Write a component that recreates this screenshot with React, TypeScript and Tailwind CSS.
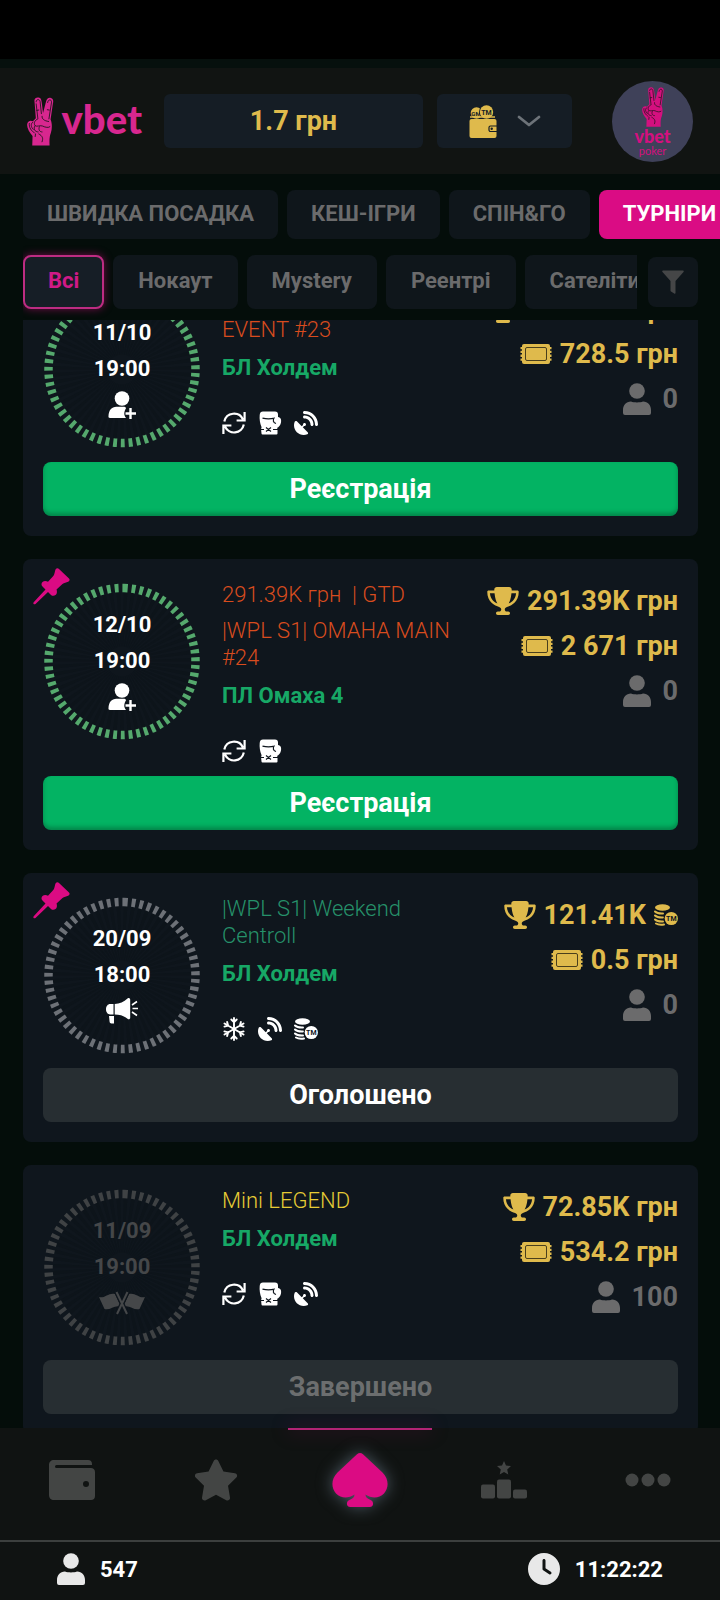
import React, { useLayoutEffect, useRef } from "react";
import { FaClock, FaSatelliteDish, FaStar, FaTrophy } from "react-icons/fa6";

type IconProps = { className?: string };

const Hand = ({ className }: IconProps) => (
  <svg viewBox="0 0 81 148" className={className} aria-hidden="true">
    <path
      fill="currentColor"
      d="M23 14C21 4 28 0 35 1C43 2 44 9 45 16L49 48L58 14C60 4 66 0 73 2C81 4 81 12 79 20L72 68C77 80 77 96 73 108C69 118 68 128 69 147H16L17 118C6 106-2 90 1 80C4 71 11 70 18 73L27 64Z"
    />
    <g fill="none" stroke="#111412" strokeWidth="2.5" strokeLinecap="round">
      <path d="M28 14C27 6 38 4 40 13L44 50M28 20L33 64M63 16C64 6 75 5 75 15L67 66M30 40l6-1M62 38l6 1" />
      <path d="M33 66C24 70 20 78 24 86C30 92 40 84 48 88C56 92 66 94 70 90M18 76C10 80 12 92 19 98M7 80C5 92 14 104 22 108M24 88C18 96 24 106 34 106M38 90C34 98 38 106 46 106M36 112C48 118 50 126 46 136M46 58C45 66 52 72 66 74M26 112L25 120" />
    </g>
  </svg>
);

const Person = ({ className }: IconProps) => (
  <svg viewBox="0 0 28 32" fill="currentColor" className={className} aria-hidden="true">
    <circle cx="14" cy="8" r="7.8" />
    <path d="M8 18.500c3 1.200 9 1.200 12 0 5 0 8 4 8 8.500V30a2 2 0 0 1-2 2H2a2 2 0 0 1-2-2v-3c0-4.500 3-8.500 8-8.500Z" />
  </svg>
);

const Ticket = ({ className }: IconProps) => (
  <svg viewBox="0 0 32 20" className={className} aria-hidden="true">
    <rect x="2" y="0" width="28" height="20" rx="2" fill="currentColor" />
    <path d="M1.500 3v14M30.500 3v14" stroke="currentColor" strokeWidth="2" strokeDasharray="2.300 1.500" />
    <rect x="5.500" y="3.500" width="21" height="13" rx="1.500" fill="none" stroke="#4a3f1c" strokeWidth="1" />
  </svg>
);

const Coins = ({ className }: IconProps) => (
  <svg viewBox="0 0 24 24" className={className} aria-hidden="true">
    <ellipse cx="8.500" cy="4.500" rx="7.500" ry="3.200" fill="currentColor" />
    <path
      d="M1 8.500c1.500 1.500 4 2.200 8 2M1 12.500c1.500 1.500 4 2.200 8 2M1 16.500c1.500 1.500 4 2.200 8 2M2 20.500c1.500 1 4 1.500 8 1"
      fill="none"
      stroke="currentColor"
      strokeWidth="2"
      strokeLinecap="round"
    />
    <circle cx="17.300" cy="15.500" r="7.600" fill="#0f161d" />
    <circle cx="17.300" cy="15.500" r="6.600" fill="currentColor" />
    <text x="17.300" y="18" textAnchor="middle" fontSize="7" fontWeight="700" fill="#0f161d">
      TM
    </text>
  </svg>
);

const Refresh = ({ className }: IconProps) => (
  <svg viewBox="0 0 24 24" fill="none" stroke="currentColor" strokeWidth="2.200" className={className} aria-hidden="true">
    <path d="M2.300 10.500A9.900 9.900 0 0 1 21 8.500M22.600 1v8.500h-8M21.800 13.500A9.900 9.900 0 0 1 3 15.500M1.400 23v-8.500h8" />
  </svg>
);

const Glove = ({ className }: IconProps) => (
  <svg viewBox="0 0 24 24" className={className} aria-hidden="true">
    <path
      fill="currentColor"
      d="M5 .5h12c2 0 3 1 3 3V6c3 .5 3.500 3 3 5.500-.5 3-2.500 4.500-4 5.500v1.500H3.500V16C2 12.500 1.300 8 1.700 4 1.900 1.500 3 .5 5 .5Z"
    />
    <path fill="currentColor" d="M3 17.500h16.500v5a1 1 0 0 1-1 1H4.500a1 1 0 0 1-1-1Z" />
    <path
      fill="none"
      stroke="#0f161d"
      strokeWidth="1.200"
      d="M4.500 7.200c4 1 8 1 12 0M16.500 6.500c-2 2.500-1.500 5 1.500 6M8 16.500l5 4M13 16.500l-5 4M2 18.500h4M15 18.500h5"
    />
  </svg>
);

const Snowflake = ({ className }: IconProps) => (
  <svg viewBox="0 0 24 24" fill="none" stroke="currentColor" strokeWidth="1.900" strokeLinecap="round" className={className} aria-hidden="true">
    {[0, 60, 120, 180, 240, 300].map((a) => (
      <path key={a} transform={`rotate(${a} 12 12)`} d="M12 12V1M9.300 2.500L12 5.200 14.700 2.500" />
    ))}
  </svg>
);

const Pin = ({ className }: IconProps) => (
  <svg viewBox="0 0 37 37" fill="currentColor" className={className} aria-hidden="true">
    <path d="M22.500 1.500c1-1.500 2.500-1.500 3.500-.5l10 9.500c1 1 .8 2.500-.8 3.300-2 .8-4 1-5.700 2.300l-6 5.500c.8 2 .5 4.500-1 5.500-1.500 1.200-3.500.8-4.500-.2l-3-3L2.500 36C1 37-.3 35.700.7 34.300L12.500 21.500l-3-3c-1.500-1.500-1.200-3.500 0-4.500 1.500-1.200 3.500-1.200 5.500-.3l5.500-6c1.200-1.700 1.200-4.200 2-6.200Z" />
  </svg>
);

const PersonPlus = () => (
  <svg viewBox="0 0 28 28" fill="currentColor" className="h-7 w-7" aria-hidden="true">
    <circle cx="14" cy="7.500" r="7.300" />
    <path d="M8.500 15.800h7c1.500 0 2.500.5 2.500 1.500-2 3.500-2.500 6.500 0 9.700H2c-1.200 0-1.700-.8-1.500-2 .3-5.500 3-9.200 8-9.200Z" />
    <path d="M22.500 17v11M17.500 22.500h10.500" stroke="currentColor" strokeWidth="2.400" />
  </svg>
);

const Megaphone = () => (
  <svg viewBox="0 0 32 26" fill="currentColor" className="h-[26px] w-8" aria-hidden="true">
    <path d="M4 6h3.500v10.500H4c-2 0-4-2-4-5.200S2 6 4 6ZM3 18h5v7.500H5.500c-1.200 0-1.700-.7-1.900-1.700Z" />
    <path d="M8.700 6C13.500 6 18 3.500 21.500.5c1.500-1 2.700 0 2.700 1.200v18c0 1.500-1.500 2-2.700 1-3.500-3-8-4.200-12.800-4.200Z" />
    <path d="M26 7l5-3.500M26.500 10.500h5.500M26 14l5 3.500" stroke="currentColor" strokeWidth="1.600" />
  </svg>
);

const Flags = () => (
  <svg viewBox="0 0 46 24" fill="currentColor" className="h-6 w-[46px]" aria-hidden="true">
    <path d="M0 6C5 8 10 1 16 3l6 13c-6-3-11 4-16.500 2ZM46 6C41 8 36 1 30 3l-6 13c6-3 11 4 16.500 2Z" />
    <path d="M17.500 1L28 23M28.500 1L18 23" stroke="#0f161d" strokeWidth="4.500" />
    <path d="M17.500 1L28 23M28.500 1L18 23" stroke="currentColor" strokeWidth="2" />
  </svg>
);

const WalletCoins = () => (
  <svg viewBox="0 0 28 33" className="h-[33px] w-7 text-[#dfba4c]" aria-hidden="true">
    <circle cx="7.500" cy="8" r="5.800" fill="currentColor" />
    <text x="7" y="11" textAnchor="middle" fontSize="6" fontWeight="700" fill="#151d25">
      GM
    </text>
    <circle cx="17.500" cy="7" r="7.500" fill="#151d25" />
    <circle cx="17.500" cy="7" r="6.700" fill="currentColor" />
    <text x="17.500" y="9.500" textAnchor="middle" fontSize="7" fontWeight="700" fill="#151d25">
      TM
    </text>
    <path d="M1 12h25" stroke="currentColor" strokeWidth="1.500" />
    <rect x="0.500" y="14" width="27" height="19" rx="2" fill="currentColor" />
    <path d="M28 21h-6.500a1.500 1.500 0 0 0-1.500 1.500v2.500a1.500 1.500 0 0 0 1.500 1.500H28" fill="none" stroke="#151d25" strokeWidth="1.200" />
    <circle cx="22.700" cy="23.700" r="1.200" fill="#151d25" />
  </svg>
);

const WalletSolid = () => (
  <svg viewBox="0 0 46 40" fill="currentColor" className="h-10 w-[46px]" aria-hidden="true">
    <path
      fillRule="evenodd"
      d="M5 0h34c2.500 0 4 1.500 4 4v1H7.500a1.500 1.500 0 0 0 0 3H42c2 0 4 1.500 4 4v24c0 2.500-1.500 4-4 4H5c-3 0-5-2-5-5V5c0-3 2-5 5-5Zm32 21a3 3 0 1 0 0 6 3 3 0 0 0 0-6Z"
    />
  </svg>
);

const Spade = ({ className }: IconProps) => (
  <svg viewBox="0 0 56 56" fill="currentColor" className={className} aria-hidden="true">
    <path d="M28 1c1 0 2 .4 3 1.300L50.500 20.500c6.500 6.500 6.500 15.500 1.500 21-5 5-12.500 5-18.500 1 0 2.800 1.800 4.200 4.700 5.200 4 1.300 3.800 7.300-.4 7.300H18.200c-4.200 0-4.400-6-.4-7.300 2.900-1 4.700-2.400 4.700-5.200-6 4-13.500 4-18.500-1-5-5.500-5-14.500 1.500-21L25 2.300C26 1.400 27 1 28 1Z" />
  </svg>
);

const Podium = () => (
  <svg viewBox="0 0 46 38" fill="currentColor" className="h-[38px] w-[46px]" aria-hidden="true">
    <path d="M23 0l2 4.600 5 .5-3.800 3.400 1.100 5L23 11l-4.300 2.500 1.100-5L16 5.100l5-.5Z" />
    <rect x="0" y="23.500" width="14" height="14" rx="2" />
    <rect x="16" y="18.500" width="14" height="19" rx="2" />
    <rect x="32" y="28.500" width="14" height="9" rx="2" />
  </svg>
);

const Dots = () => (
  <svg viewBox="0 0 46 14" fill="currentColor" className="h-3.5 w-[46px]" aria-hidden="true">
    <circle cx="7" cy="7" r="6.500" />
    <circle cx="23" cy="7" r="6.500" />
    <circle cx="39" cy="7" r="6.500" />
  </svg>
);

const Funnel = () => (
  <svg viewBox="0 0 22 24" fill="currentColor" className="h-6 w-[22px]" aria-hidden="true">
    <path d="M1 .5h20c.8 0 1 .8.500 1.500L13.500 11v12c0 .8-.7 1-1.300.6L9 21.500c-.4-.3-.5-.6-.5-1V11L.5 2C0 1.300.2.5 1 .5Z" />
  </svg>
);

type Feature = "refresh" | "glove" | "dish" | "snow" | "coins";
type Status = "open" | "announced" | "finished";

type Tournament = {
  date: string;
  time: string;
  status: Status;
  pinned?: boolean;
  guarantee?: string;
  title: string;
  titleColor: string;
  game: string;
  features: Feature[];
  prize: string;
  prizeInCoins?: boolean;
  buyIn: string;
  players: number;
};

const tournaments: Tournament[] = [
  {
    date: "11/10",
    time: "19:00",
    status: "open",
    title: "|WPL S1| NLH MAIN EVENT #23",
    titleColor: "text-[#d84c1e]",
    game: "БЛ Холдем",
    features: ["refresh", "glove", "dish"],
    prize: "291.39K грн",
    buyIn: "728.5 грн",
    players: 0,
  },
  {
    date: "12/10",
    time: "19:00",
    status: "open",
    pinned: true,
    guarantee: "291.39K грн\u00a0 | GTD",
    title: "|WPL S1| OMAHA MAIN #24",
    titleColor: "text-[#d84c1e]",
    game: "ПЛ Омаха 4",
    features: ["refresh", "glove"],
    prize: "291.39K грн",
    buyIn: "2 671 грн",
    players: 0,
  },
  {
    date: "20/09",
    time: "18:00",
    status: "announced",
    pinned: true,
    title: "|WPL S1| Weekend Centroll",
    titleColor: "text-[#26916a]",
    game: "БЛ Холдем",
    features: ["snow", "dish", "coins"],
    prize: "121.41K",
    prizeInCoins: true,
    buyIn: "0.5 грн",
    players: 0,
  },
  {
    date: "11/09",
    time: "19:00",
    status: "finished",
    title: "Mini LEGEND",
    titleColor: "text-[#e6cb35]",
    game: "БЛ Холдем",
    features: ["refresh", "glove", "dish"],
    prize: "72.85K грн",
    buyIn: "534.2 грн",
    players: 100,
  },
];

const featureIcons: Record<Feature, React.ReactNode> = {
  refresh: <Refresh className="h-6 w-6" />,
  glove: <Glove className="h-6 w-6" />,
  dish: <FaSatelliteDish className="h-6 w-6" />,
  snow: <Snowflake className="h-6 w-6" />,
  coins: <Coins className="h-6 w-6" />,
};

const statuses = {
  open: {
    label: "Реєстрація",
    ring: "text-[#55a96d]",
    text: "text-white",
    button: "bg-[#03b363] text-white shadow-[inset_0_-3px_4px_rgba(0,0,0,0.25)]",
    icon: <PersonPlus />,
  },
  announced: {
    label: "Оголошено",
    ring: "text-[#6d7177]",
    text: "text-white",
    button: "bg-[#272e32] text-white",
    icon: <Megaphone />,
  },
  finished: {
    label: "Завершено",
    ring: "text-[#3f4244]",
    text: "text-[#454749]",
    button: "bg-[#272e32] text-[#6c6e6f]",
    icon: <Flags />,
  },
};

const Ring = ({ item }: { item: Tournament }) => {
  const status = statuses[item.status];
  return (
    <div className="relative h-40 w-[158px] shrink-0">
      <svg viewBox="0 0 158 160" className={`h-full w-full ${status.ring}`} aria-hidden="true">
        <g fill="none" transform="rotate(-88.5 79 80.500)">
          <circle cx="79" cy="80.500" r="42" stroke="#0b1117" strokeWidth="54" pathLength="590" strokeDasharray="5 5" opacity="0.4" />
          <circle cx="79" cy="80.500" r="73.500" stroke="currentColor" strokeWidth="8.500" pathLength="592" strokeDasharray="5 5" />
        </g>
      </svg>
      <div className={`absolute inset-0 flex flex-col items-center justify-center text-[22px] leading-9 font-bold ${status.text}`}>
        <span>{item.date}</span>
        <span>{item.time}</span>
        <span className="flex h-9 items-center">{status.icon}</span>
      </div>
    </div>
  );
};

const TournamentCard = ({ item }: { item: Tournament }) => {
  const status = statuses[item.status];
  return (
    <article className="relative rounded-lg bg-[#0f161d] px-5 pt-[22px] pb-5">
      {item.pinned && <Pin className="absolute top-[9px] left-2.5 h-[37px] w-[37px] text-[#db0b83]" />}
      <div className="flex pb-[13px]">
        <Ring item={item} />
        <div className="ml-[21px] min-w-0 flex-1 text-[22px] leading-[27px]">
          {item.guarantee && <p className={`mb-[9px] font-light ${item.titleColor}`}>{item.guarantee}</p>}
          <h2 className={`font-light ${item.titleColor}`}>{item.title}</h2>
          <p className="mt-[11px] font-bold text-[#17a866]">{item.game}</p>
          <div className="mt-[30px] flex gap-3 text-white">
            {item.features.map((f) => (
              <span key={f}>{featureIcons[f]}</span>
            ))}
          </div>
        </div>
        <div className="ml-6 flex shrink-0 flex-col items-end gap-[5px] text-[27px] leading-10 font-bold text-[#dfba4c]">
          <div className="flex items-center gap-2">
            <FaTrophy className="h-7 w-8" />
            <span>{item.prize}</span>
            {item.prizeInCoins && <Coins className="h-6 w-6" />}
          </div>
          <div className="flex items-center gap-2">
            <Ticket className="h-5 w-8" />
            <span>{item.buyIn}</span>
          </div>
          <div className="flex items-center gap-3 text-[#6b6b6c]">
            <Person className="h-8 w-7" />
            <span>{item.players}</span>
          </div>
        </div>
      </div>
      <button
        type="button"
        disabled={item.status === "finished"}
        className={`h-[54px] w-full rounded-lg text-[27px] font-bold ${status.button}`}
      >
        {status.label}
      </button>
    </article>
  );
};

const Header = () => (
  <header className="flex h-[106px] shrink-0 items-center bg-[#111412] px-[27px]">
    <a href="#home" className="flex w-[115px] shrink-0 items-center text-[#d8278f]">
      <Hand className="h-[49px] w-[27px]" />
      <span className="ml-2 pb-1 font-['Lato',sans-serif] text-[40px] leading-none font-black">vbet</span>
    </a>
    <button type="button" className="ml-[22px] h-[54px] flex-1 rounded-md bg-[#151d25] text-[27px] font-bold text-[#dfba4c]">
      1.7 грн
    </button>
    <button
      type="button"
      aria-label="Гаманець"
      className="ml-3.5 flex h-[54px] w-[135px] items-center justify-center gap-5 rounded-md bg-[#151d25]"
    >
      <WalletCoins />
      <svg viewBox="0 0 24 12" className="h-3 w-6 text-[#6d7379]" aria-hidden="true">
        <path d="M2 2l10 8L22 2" fill="none" stroke="currentColor" strokeWidth="2.800" strokeLinecap="round" strokeLinejoin="round" />
      </svg>
    </button>
    <a
      href="#profile"
      className="ml-10 flex h-[81px] w-[81px] shrink-0 flex-col items-center rounded-full bg-[#3f4159] pt-1.5 font-['Lato',sans-serif] text-[#d4107f]"
    >
      <Hand className="h-10 w-[22px]" />
      <span className="text-[18px] leading-[18px] font-black">vbet</span>
      <span className="text-[11px] leading-3">poker</span>
    </a>
  </header>
);

const tabs = ["ШВИДКА ПОСАДКА", "КЕШ-ІГРИ", "СПІН&ГО", "ТУРНІРИ"];
const filters = ["Всі", "Нокаут", "Mystery", "Реентрі", "Сателіти"];

const Filters = () => (
  <div className="shrink-0 pt-4 pb-[11px] text-[22px] font-bold">
    <nav className="flex gap-[9px] overflow-hidden pl-[23px]">
      {tabs.map((tab) => (
        <button
          key={tab}
          type="button"
          className={`h-[49px] shrink-0 rounded-lg px-6 pb-0.5 ${
            tab === "ТУРНІРИ" ? "bg-[#da0c84] text-white" : "bg-[#0f161b] text-[#6b6b6c]"
          }`}
        >
          {tab}
        </button>
      ))}
    </nav>
    <div className="mt-4 flex items-center pr-[22px] pl-[23px]">
      <div className="flex min-w-0 flex-1 gap-[9px] overflow-x-clip">
        {filters.map((filter) => (
          <button
            key={filter}
            type="button"
            className={`h-[54px] shrink-0 rounded-lg border-2 px-[23px] pb-1 ${
              filter === "Всі"
                ? "border-[#bd2c82] bg-[#161e26] text-[#d01a87] shadow-[0_0_8px_rgba(219,11,131,0.5)]"
                : "border-transparent bg-[#0f161b] text-[#6b6b6c]"
            }`}
          >
            {filter}
          </button>
        ))}
      </div>
      <button
        type="button"
        aria-label="Фільтр"
        className="ml-[11px] flex h-[50px] w-[50px] shrink-0 items-center justify-center rounded-lg bg-[#0f161b] text-[#454647]"
      >
        <Funnel />
      </button>
    </div>
  </div>
);

const BottomNav = () => (
  <nav className="grid h-28 shrink-0 grid-cols-5 bg-[#101312] text-[#434544]">
    <a href="#wallet" aria-label="Гаманець" className="flex items-center justify-center pb-2">
      <WalletSolid />
    </a>
    <a href="#favorites" aria-label="Обране" className="flex items-center justify-center pb-2">
      <FaStar className="h-[46px] w-[46px]" />
    </a>
    <a href="#lobby" aria-label="Лобі" className="relative flex items-center justify-center pb-2 text-[#db0b83]">
      <span className="absolute inset-x-0 top-0 h-0.5 bg-[#b32475] shadow-[0_0_18px_rgba(219,11,131,0.5)]" />
      <Spade className="h-14 w-14 drop-shadow-[0_0_8px_rgba(130,150,170,0.55)]" />
    </a>
    <a href="#leaders" aria-label="Рейтинг" className="flex items-center justify-center pb-2">
      <Podium />
    </a>
    <a href="#more" aria-label="Більше" className="flex items-center justify-center pb-2">
      <Dots />
    </a>
  </nav>
);

export default function App() {
  const list = useRef<HTMLElement>(null);

  useLayoutEffect(() => {
    if (list.current) list.current.scrollTop = 53;
  }, []);

  return (
    <div className="flex h-screen flex-col bg-[#040d0a] font-['Roboto',sans-serif]">
      <div className="h-[59px] shrink-0 bg-black" />
      <div className="h-[9px] shrink-0 bg-[#06100d]" />
      <Header />
      <Filters />
      <main ref={list} className="min-h-0 flex-1 overflow-y-auto [scrollbar-width:none]">
        <div className="flex flex-col gap-[23px] pr-[22px] pb-6 pl-[23px]">
          {tournaments.map((item) => (
            <TournamentCard key={item.date} item={item} />
          ))}
        </div>
      </main>
      <BottomNav />
      <footer className="flex h-15 shrink-0 items-center justify-between border-t-2 border-[#3c3f3e] bg-[#101312] px-[57px] pb-1 text-[22px] font-bold text-white">
        <div className="flex items-center gap-[15px]">
          <Person className="h-8 w-7 text-[#e8e8e8]" />
          <span>547</span>
        </div>
        <div className="flex items-center gap-[15px]">
          <FaClock className="h-8 w-8 text-[#e8e8e8]" />
          <span>11:22:22</span>
        </div>
      </footer>
    </div>
  );
}
